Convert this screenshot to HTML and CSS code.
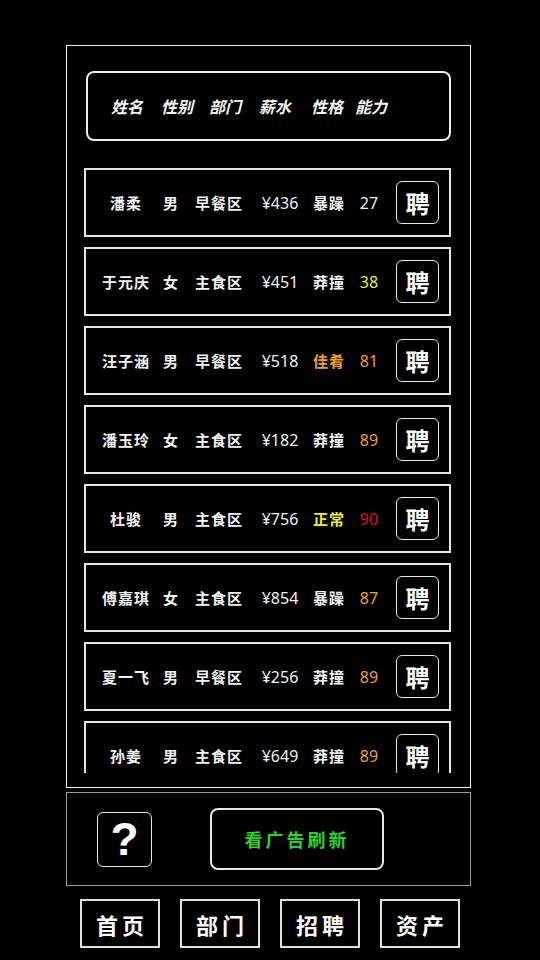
FILE: index.html
```html
<!DOCTYPE html>
<html lang="zh">
<head>
<meta charset="utf-8">
<link rel="stylesheet" href="styles.css">
</head>
<body>
<div class="outer">
  <div class="header">
    <span class="h h1">姓名</span><span class="h h2">性别</span><span class="h h3">部门</span><span class="h h4">薪水</span><span class="h h5">性格</span><span class="h">能力</span>
  </div>
  <div class="list">
    <div class="row"><span>潘柔</span><span>男</span><span>早餐区</span><span class="num">¥436</span><span>暴躁</span><span class="num">27</span><div class="hire">聘</div></div>
    <div class="row"><span>于元庆</span><span>女</span><span>主食区</span><span class="num">¥451</span><span>莽撞</span><span class="num yellow">38</span><div class="hire">聘</div></div>
    <div class="row"><span>汪子涵</span><span>男</span><span>早餐区</span><span class="num">¥518</span><span class="orange">佳肴</span><span class="num orange">81</span><div class="hire">聘</div></div>
    <div class="row"><span>潘玉玲</span><span>女</span><span>主食区</span><span class="num">¥182</span><span>莽撞</span><span class="num orange">89</span><div class="hire">聘</div></div>
    <div class="row"><span>杜骏</span><span>男</span><span>主食区</span><span class="num">¥756</span><span class="yellow">正常</span><span class="num red">90</span><div class="hire">聘</div></div>
    <div class="row"><span>傅嘉琪</span><span>女</span><span>主食区</span><span class="num">¥854</span><span>暴躁</span><span class="num orange">87</span><div class="hire">聘</div></div>
    <div class="row"><span>夏一飞</span><span>男</span><span>早餐区</span><span class="num">¥256</span><span>莽撞</span><span class="num orange">89</span><div class="hire">聘</div></div>
    <div class="row"><span>孙姜</span><span>男</span><span>主食区</span><span class="num">¥649</span><span>莽撞</span><span class="num orange">89</span><div class="hire">聘</div></div>
  </div>
</div>
<div class="panel">
  <div class="help">?</div>
  <div class="ad">看广告刷新</div>
</div>
<div class="nav">
  <div class="tab">首页</div>
  <div class="tab">部门</div>
  <div class="tab">招聘</div>
  <div class="tab">资产</div>
</div>
</body>
</html>
```
FILE: styles.css
```css
* { box-sizing: border-box; }
html, body { margin: 0; padding: 0; background: #000; }
body {
  width: 540px;
  height: 960px;
  overflow: hidden;
  color: #f2f2f2;
  font-family: "Noto Sans CJK SC", "Noto Sans", sans-serif;
}
.outer {
  margin: 45px 0 0 66px;
  width: 405px;
  height: 743px;
  border: 1px solid #f0f0f0;
  padding: 25px 18px 0 17px;
}
.header {
  margin-left: 2px;
  width: 365px;
  height: 70px;
  border: 2px solid #eee;
  border-radius: 8px;
  display: flex;
  align-items: center;
  padding-left: 23px;
  font-size: 16px;
  font-style: italic;
  font-weight: bold;
  color: #f4f4f4;
}
.h { display: inline-block; letter-spacing: 0; }
.h1 { margin-right: 18px; }
.h2 { margin-right: 16px; }
.h3 { margin-right: 18px; }
.h4 { margin-right: 20px; }
.h5 { margin-right: 12px; }
.list {
  margin-top: 27px;
  height: 605px;
  overflow: hidden;
  display: flex;
  flex-direction: column;
  gap: 10px;
}
.row {
  flex: none;
  width: 367px;
  height: 69px;
  border: 2px solid #e6e6e6;
  display: grid;
  grid-template-columns: 60px 30px 66px 56px 42px 38px 43px;
  column-gap: 0;
  align-items: center;
  padding-left: 10px;
  font-size: 15px;
  font-weight: bold;
}
.row span {
  text-align: center;
  white-space: nowrap;
  letter-spacing: 1px;
}
.row .num {
  font-family: "Noto Sans", "Noto Sans CJK SC", sans-serif;
  font-weight: normal;
  font-size: 16px;
  letter-spacing: 0;
}
.yellow { color: #f2ee1a; }
.orange { color: #f0a022; }
.red { color: #e01010; }
.hire {
  margin-left: 8px;
  width: 43px;
  height: 43px;
  border: 1px solid #e8e8e8;
  border-radius: 6px;
  display: flex;
  align-items: center;
  justify-content: center;
  font-size: 24px;
  font-weight: bold;
  color: #fff;
}
.panel {
  margin: 4px 0 0 66px;
  width: 405px;
  height: 94px;
  border: 1px solid #9a9a9a;
  display: flex;
  align-items: center;
  padding-left: 30px;
  gap: 58px;
}
.help {
  width: 55px;
  height: 55px;
  border: 1px solid #e8e8e8;
  border-radius: 6px;
  display: flex;
  align-items: center;
  justify-content: center;
  font-family: "Liberation Sans", sans-serif;
  font-weight: bold;
  font-size: 46px;
  color: #fff;
}
.ad {
  width: 174px;
  height: 62px;
  border: 2px solid #e6e6e6;
  border-radius: 8px;
  display: flex;
  align-items: center;
  justify-content: center;
  color: #22d822;
  font-size: 18px;
  font-weight: bold;
  letter-spacing: 3px;
}
.nav {
  margin: 13px 0 0 80px;
  display: flex;
  gap: 20px;
}
.tab {
  width: 80px;
  height: 49px;
  border: 2px solid #e0e0e0;
  display: flex;
  align-items: center;
  justify-content: center;
  font-size: 22px;
  font-weight: bold;
  letter-spacing: 4px;
  padding-left: 4px;
  color: #fff;
}
```
